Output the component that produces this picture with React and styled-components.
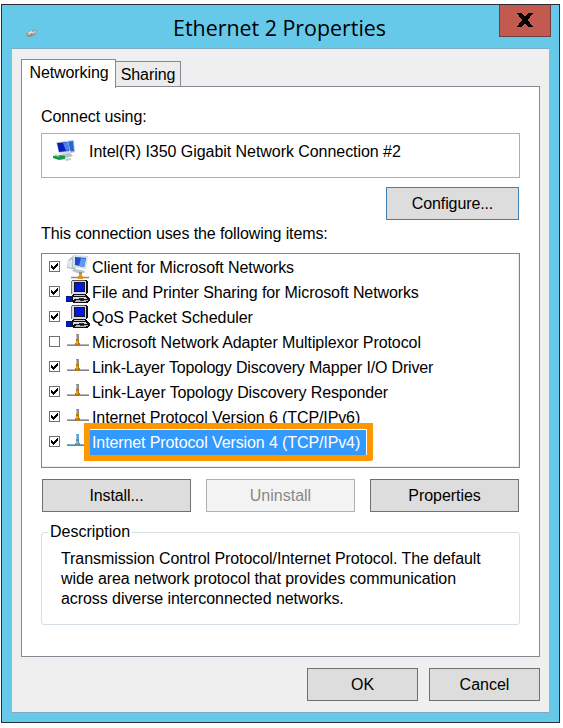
import React from "react";
import styled, { createGlobalStyle } from "styled-components";

const Global = createGlobalStyle`
  * { box-sizing: border-box; }
  body { margin: 0; background: #fff; font: 16px/20px "Liberation Sans", Arial, sans-serif; color: #000; }
  #root { display: flow-root; }
`;

const Window = styled.main`
  width: 559px;
  height: 719px;
  margin: 4px 0 0 1px;
  padding: 0 10px 9px;
  border: 1px solid #2b2c34;
  background: #66c9ea;
`;
const TitleBar = styled.header`
  height: 43px;
  display: grid;
  grid-template-columns: 40px 1fr 52px;
  margin-right: -2px;
`;
const TitleIcon = styled.svg`
  margin: 22px 0 0 13px;
`;
const Title = styled.h1`
  margin: 7px 0 0 121px;
  font: 21.4px/32px "Open Sans", "Noto Sans", sans-serif;
  white-space: nowrap;
`;
const CloseButton = styled.button`
  width: 52px;
  height: 32px;
  padding: 0 0 1px;
  display: grid;
  place-items: center;
  border: 1px solid #713f42;
  border-top: 0;
  background: #c35a50;
`;
const Client = styled.div`
  width: 537px;
  height: 665px;
  padding: 10px 9px 0;
  border-top: 1px solid #86a9c2;
  border-bottom: 1px solid #86a9c2;
  background: #efefef;
`;
const Tabs = styled.nav`
  display: flex;
  align-items: flex-end;
  height: 27px;
`;
const Tab = styled.button`
  width: ${(p) => (p.$active ? 95 : 66)}px;
  height: ${(p) => (p.$active ? 29 : 26)}px;
  margin: 0 0 ${(p) => (p.$active ? -2 : -1)}px ${(p) => (p.$active ? 0 : -1)}px;
  padding: ${(p) => (p.$active ? "0 0 3px 1px" : "2px 0 0")};
  border: 1px solid #898995;
  border-bottom: ${(p) => (p.$active ? "0" : "1px solid #898995")};
  background: ${(p) => (p.$active ? "#fff" : "#ececec")};
  font: inherit;
  letter-spacing: ${(p) => (p.$active ? -0.1 : -0.08)}px;
  z-index: ${(p) => (p.$active ? 1 : 0)};
`;
const Panel = styled.section`
  width: 519px;
  height: 571px;
  padding: 20px 19px 0;
  border: 1px solid #898995;
  background: #fff;
`;
const Text = styled.span`
  letter-spacing: ${(p) => p.$spacing || 0}px;
  white-space: nowrap;
`;
const Label = styled.div`
  height: 20px;
  letter-spacing: ${(p) => p.$spacing || 0}px;
  white-space: nowrap;
`;
const Adapter = styled.div`
  width: 479px;
  height: 45px;
  margin-top: 6px;
  padding: 5px 10px;
  display: flex;
  gap: 12px;
  border: 1px solid #adadb2;
  line-height: 25px;
`;
const Configure = styled.div`
  display: flex;
  justify-content: flex-end;
  margin: 9px 1px 4px 0;
`;
const Button = styled.button`
  width: ${(p) => p.$width}px;
  height: 33px;
  padding: 0;
  border: 1px solid ${(p) => (p.disabled ? "#adb2b5" : p.$focus ? "#407faf" : "#707070")};
  background: ${(p) => (p.disabled ? "#f3f3f3" : "#ddd")};
  color: ${(p) => (p.disabled ? "#888" : "#000")};
  font: inherit;
  letter-spacing: ${(p) => p.$spacing || 0}px;
`;
const List = styled.ul`
  width: 479px;
  height: 215px;
  margin: 9px 0 11px;
  padding: 1px 0 0 7px;
  list-style: none;
  border: 1px solid #82838f;
  box-shadow: inset -1px -1px #ededf0;
`;
const Item = styled.li`
  height: 25px;
  display: grid;
  grid-template-columns: 17px 25px 1fr;
  align-items: center;
`;
const Check = styled.svg`
  display: block;
  margin-bottom: 2px;
`;
const ItemIcon = styled.svg`
  display: block;
`;
const ItemLabel = styled.div`
  height: 25px;
  padding-left: 1px;
  line-height: 25px;
  letter-spacing: ${(p) => p.$spacing}px;
  white-space: nowrap;
`;
const Selected = styled(ItemLabel)`
  position: relative;
  width: 276px;
  margin-left: -1px;
  padding-left: 2px;
  background: #3399ff;
  color: #fff;
  box-shadow: 0 -1px #fff, 1px 0 #fff, 1px -1px #fff, 0 0 0 6px #ff9800, 0 -1px 0 6px #ff9800, 1px -1px 0 6px #ff9800;
`;
const Actions = styled.div`
  display: flex;
  gap: 15px;
  margin-left: 1px;
`;
const Description = styled.fieldset`
  width: 479px;
  height: 103px;
  margin: 10px 0 0;
  padding: 7px 19px 0;
  border: 1px solid #d5dfe5;
  border-radius: 3px;
`;
const Legend = styled.legend`
  height: 20px;
  margin-left: -13px;
  padding: 0 2px;
`;
const Line = styled.div`
  white-space: nowrap;
  letter-spacing: ${(p) => p.$spacing || 0}px;
`;
const Footer = styled.footer`
  display: flex;
  justify-content: flex-end;
  gap: 11px;
  margin-top: 11px;
`;

function Checkbox({ checked }) {
  return (
    <Check width="11" height="11" viewBox="0 0 11 11" shapeRendering="crispEdges">
      <rect x=".5" y=".5" width="10" height="10" fill="#fff" stroke="#707070" />
      {checked && <path d="M2 4h1v1h1v1h1V5h1V4h1V3h1V2h1v3H8v1H7v1H6v1H5v1H4V8H3V7H2z" fill="#000" />}
    </Check>
  );
}
function ProtocolIcon({ blue }) {
  return (
    <ItemIcon width="23" height="25" viewBox="-1 0 23 25">
      <path d="M0 15.5h22" stroke={blue ? "#438ac2" : "#858585"} strokeWidth="1" />
      <path d="M0 14.5h22" stroke={blue ? "#7ab5df" : "#b4b4b4"} />
      <path d="M9 4h3v8H9z" fill={blue ? "#5ba5df" : "#8e8e8e"} />
      <path d="M9 5h1v6H9z" fill={blue ? "#94c4e5" : "#c1c1bc"} />
      <path d="M9 9h3v4h1v3H8v-3h1z" fill={blue ? "#638f9c" : "#b87908"} />
      <path d="M9 11h2v3H9z" fill={blue ? "#9bb7ae" : "#e4a528"} />
    </ItemIcon>
  );
}
function ClientIcon() {
  return (
    <ItemIcon width="23" height="25" viewBox="-1 0 23 25">
      <path d="M1 5l5-4 3 14-9-2z" fill="#b5bfc9" />
      <path d="M1 6l4-2v9l-4-1z" fill="#e1e7ec" />
      <path d="M6 0l15 1-2 13-13-2z" fill="#d4dce5" />
      <path d="M8 2l11 1-2 9-9-2z" fill="#174bd0" />
      <path d="M14 3l5 1-2 8-5-1z" fill="#5c9bf0" />
      <path d="M7 14l8 1 4 2-6 2-8-3z" fill="#bac2cb" />
      <path d="M12 17h3v4h-3z" fill="#929292" />
      <path d="M4 22.5h18" stroke="#98866c" strokeWidth="1.5" />
      <path d="M12 19h3v2h1v3h-5v-3h1z" fill="#d4962a" />
    </ItemIcon>
  );
}
function ServiceIcon() {
  return (
    <ItemIcon width="24" height="25" viewBox="0 0 24 25" shapeRendering="crispEdges">
      <path d="M6 0h14l2 2v11l-2 1v1h1l3 4v2l-3 2H7l-2-2v-5l2-2z" fill="#101018" />
      <path d="M5 1h1v13H5z" fill="#777a83" />
      <path d="M6 0h13v1H6z" fill="#555862" />
      <path d="M6 1h14v13H6z" fill="#d8dae0" />
      <path d="M8 2h11v10H8z" fill="#15152b" />
      <path d="M9 3h9v8H9z" fill="#0519dd" />
      <path d="M8 15h11v1H8z" fill="#c8c8c8" />
      <path d="M7 17h13v1h1v1H8v1H7z" fill="#d8d8d8" />
      <path d="M13 18h5v1h-5z" fill="#333" />
      <path d="M10 20h12v1h-2v1H9v-1h1z" fill="#b6b6b6" />
      <path d="M14 20h4v1h-4z" fill="#333" />
      <path d="M0 16h5l1 1v5H0z" fill="#06187e" />
      <path d="M0 17h4v4H0z" fill="#001dd4" />
    </ItemIcon>
  );
}
function AdapterIcon() {
  return (
    <svg width="25" height="25" viewBox="0 0 25 25">
      <path d="M11 2l11-1 1 12-8 2z" fill="#b2c6df" />
      <path d="M13 3l8-1 1 10-6 1z" fill="#2a64ce" />
      <path d="M4 3l12-1 3 12-12 1z" fill="#d4dce8" />
      <path d="M5 4l10-1 2 9-10 1z" fill="#0520b9" />
      <path d="M11 4l5-1 2 8-4 1z" fill="#4f82ef" />
      <path d="M10 15l8-1 3 3-7 2-5-2z" fill="#b8c0cc" />
      <path d="M1 17l7-1 5 1v3l-6 1-6-2z" fill="#159948" />
      <path d="M0 16l5-1 3 3z" fill="#b6e3c1" />
      <path d="M12 20l7-1v2l-5 1z" fill="#c8ccce" />
    </svg>
  );
}

const items = [
  { label: "Client for Microsoft Networks", spacing: -0.085, checked: true, icon: <ClientIcon /> },
  { label: "File and Printer Sharing for Microsoft Networks", spacing: -0.105, checked: true, icon: <ServiceIcon /> },
  { label: "QoS Packet Scheduler", spacing: -0.05, checked: true, icon: <ServiceIcon /> },
  { label: "Microsoft Network Adapter Multiplexor Protocol", spacing: -0.08, checked: false, icon: <ProtocolIcon /> },
  { label: "Link-Layer Topology Discovery Mapper I/O Driver", spacing: -0.17, checked: true, icon: <ProtocolIcon /> },
  { label: "Link-Layer Topology Discovery Responder", spacing: -0.11, checked: true, icon: <ProtocolIcon /> },
  { label: "Internet Protocol Version 6 (TCP/IPv6)", spacing: -0.105, checked: true, icon: <ProtocolIcon /> },
  { label: "Internet Protocol Version 4 (TCP/IPv4)", spacing: -0.105, checked: true, icon: <ProtocolIcon blue />, selected: true },
];

export default function App() {
  return (
    <>
      <Global />
      <Window>
        <TitleBar>
          <TitleIcon width="14" height="10" viewBox="0 0 14 10">
            <path d="M1 7l4-3 6-1 1 1-2 4-6 2-3-1z" fill="#8b9498" />
            <path d="M3 6l3-2 2 1-3 3zM7 5l3-1 1 1-3 2z" fill="#f0eee7" />
            <path d="M1 7l2-1 1 2-2 1z" fill="#b9a574" />
            <path d="M5 6l2 1M8 4l1 2M4 9l3-1" stroke="#626d72" strokeWidth=".6" />
          </TitleIcon>
          <Title>Ethernet 2 Properties</Title>
          <CloseButton aria-label="Close">
            <svg width="16" height="14" viewBox="0 0 16 14" shapeRendering="crispEdges">
              <path d="M0 0h5l3 4 3-4h5l-5 7 5 7h-5l-3-4-3 4H0l5-7z" fill="#000" />
            </svg>
          </CloseButton>
        </TitleBar>
        <Client>
          <Tabs>
            <Tab $active>Networking</Tab>
            <Tab>Sharing</Tab>
          </Tabs>
          <Panel>
            <Label $spacing={-0.08}>Connect using:</Label>
            <Adapter>
              <AdapterIcon />
              <Text $spacing={-0.05}>Intel(R) I350 Gigabit Network Connection #2</Text>
            </Adapter>
            <Configure><Button $width={133} $spacing={-0.12} $focus>Configure...</Button></Configure>
            <Label $spacing={-0.1}>This connection uses the following items:</Label>
            <List>
              {items.map(({ label, spacing, checked, icon, selected }) => (
                <Item key={label}>
                  <Checkbox checked={checked} />
                  {icon}
                  {selected ? <Selected $spacing={spacing}>{label}</Selected> : <ItemLabel $spacing={spacing}>{label}</ItemLabel>}
                </Item>
              ))}
            </List>
            <Actions>
              <Button $width={149} $spacing={-0.1}>Install...</Button>
              <Button $width={149} disabled>Uninstall</Button>
              <Button $width={149} $spacing={-0.05}>Properties</Button>
            </Actions>
            <Description>
              <Legend>Description</Legend>
              <Line $spacing={-0.075}>Transmission Control Protocol/Internet Protocol. The default</Line>
              <Line $spacing={-0.08}>wide area network protocol that provides communication</Line>
              <Line $spacing={-0.07}>across diverse interconnected networks.</Line>
            </Description>
          </Panel>
          <Footer>
            <Button $width={111}>OK</Button>
            <Button $width={111}>Cancel</Button>
          </Footer>
        </Client>
      </Window>
    </>
  );
}
